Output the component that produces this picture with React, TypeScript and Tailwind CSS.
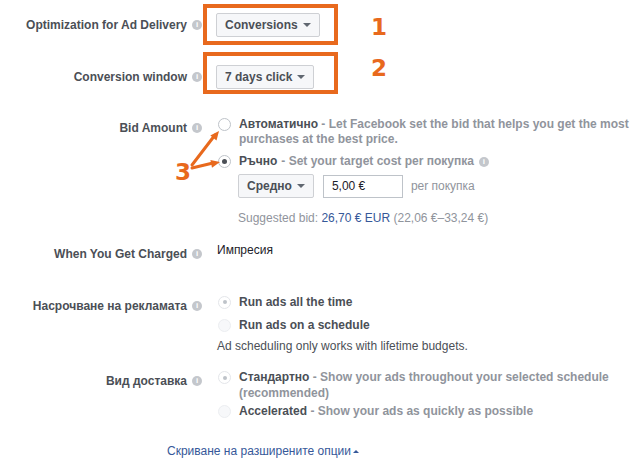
import React from "react";

const labelCls = "text-[12px] leading-[16px] font-bold text-[#4b4f56] whitespace-nowrap";
const orange = "#e8691d";

function Info() {
  return (
    <span className="ml-[5px] inline-flex h-[10px] w-[10px] shrink-0 items-center justify-center rounded-full bg-[#c4c7cc] text-[8px] font-bold leading-none text-white">
      i
    </span>
  );
}

function Label({ text, pt }: { text: string; pt: string }) {
  return (
    <div className={`flex w-[203px] shrink-0 justify-end pr-[1px] ${pt}`}>
      <div className="flex items-center">
        <span className={labelCls}>{text}</span>
        <Info />
      </div>
    </div>
  );
}

function Caret() {
  return <span className="ml-[5px] h-0 w-0 border-x-[4px] border-t-[4px] border-x-transparent border-t-[#606770]" />;
}

function Dropdown({ text }: { text: string }) {
  return (
    <div className="flex h-[24px] w-max items-center rounded-[2px] border border-[#ced0d4] bg-[#f6f7f9] px-[8px] text-[12px] font-bold text-[#4b4f56]">
      {text}
      <Caret />
    </div>
  );
}

type RadioKind = "empty" | "checked" | "soft" | "faint";

function Radio({ kind }: { kind: RadioKind }) {
  const ring = {
    empty: "border-[#bec3c9] bg-white",
    checked: "border-[#bec3c9] bg-white",
    soft: "border-[#e4e6ea] bg-white",
    faint: "border-[#eceef1] bg-[#f7f8fa]",
  }[kind];
  return (
    <span className={`flex h-[13px] w-[13px] shrink-0 items-center justify-center rounded-full border ${ring}`}>
      {kind === "checked" && <span className="h-[5px] w-[5px] rounded-full bg-[#4b4f56]" />}
      {kind === "soft" && <span className="h-[4px] w-[4px] rounded-full bg-[#bec3c9]" />}
    </span>
  );
}

export default function App() {
  return (
    <div className="relative h-[459px] w-[642px] overflow-hidden bg-white font-['Liberation_Sans',Arial,sans-serif]">
      {/* Optimization */}
      <div className="mt-[4px] flex items-start">
        <Label text="Optimization for Ad Delivery" pt="pt-[13px]" />
        <div className="h-[41px] w-[135px] border-4 border-[#e8691d] pl-[9px] pt-[5px]">
          <Dropdown text="Conversions" />
        </div>
        <span className="ml-[33px] mt-[12px] font-['DejaVu_Sans',sans-serif] text-[23px] font-bold leading-[23px] text-[#e8691d]">1</span>
      </div>

      {/* Conversion window */}
      <div className="mt-[7px] flex items-start">
        <Label text="Conversion window" pt="pt-[17px]" />
        <div className="h-[42px] w-[135px] border-4 border-[#e8691d] pl-[9px] pt-[9px]">
          <Dropdown text="7 days click" />
        </div>
        <span className="ml-[33px] mt-[5px] font-['DejaVu_Sans',sans-serif] text-[23px] font-bold leading-[23px] text-[#e8691d]">2</span>
      </div>

      {/* Bid amount */}
      <div className="mt-[23px] flex items-start">
        <Label text="Bid Amount" pt="pt-[3px]" />
        <div className="pl-[15px] text-[12px] font-bold">
          <div className="flex items-start gap-[8px]">
            <span className="mt-[1px]"><Radio kind="empty" /></span>
            <p className="w-[396px] leading-[15px] text-[#90949c]">
              <span className="text-[#4b4f56]">Автоматично</span> - Let Facebook set the bid that helps you get the most purchases at the best price.
            </p>
          </div>
          <div className="mt-[7px] flex items-start gap-[8px]">
            <span className="mt-[1px]"><Radio kind="checked" /></span>
            <p className="flex items-center leading-[15px] text-[#90949c]">
              <span className="mr-[4px] text-[#4b4f56]">Ръчно</span> - Set your target cost per покупка
              <Info />
            </p>
          </div>
          <div className="mt-[5px] pl-[20px]">
            <div className="flex items-center">
              <Dropdown text="Средно" />
              <div className="ml-[9px] flex h-[23px] w-[80px] items-center border border-[#bec3c9] bg-white pl-[8px] text-[12px] font-normal text-[#1d2129]">
                5,00 €
              </div>
              <span className="ml-[8px] text-[12px] font-normal text-[#90949c]">per покупка</span>
            </div>
            <p className="mt-[12px] text-[12px] font-normal leading-[16px] text-[#90949c]">
              Suggested bid: <span className="text-[#365899]">26,70 € EUR</span> (22,06 €–33,24 €)
            </p>
          </div>
        </div>
      </div>

      {/* When you get charged */}
      <div className="mt-[16px] flex items-start">
        <Label text="When You Get Charged" pt="pt-[4px]" />
        <p className="pl-[14px] text-[12px] leading-[16px] text-[#1d2129]">Импресия</p>
      </div>

      {/* Scheduling */}
      <div className="mt-[32px] flex items-start">
        <Label text="Насрочване на рекламата" pt="pt-[4px]" />
        <div className="text-[12px]">
          <div className="flex items-center gap-[8px] pl-[15px]">
            <Radio kind="soft" />
            <span className="font-bold leading-[16px] text-[#4b4f56]">Run ads all the time</span>
          </div>
          <div className="mt-[7px] flex items-center gap-[8px] pl-[15px]">
            <Radio kind="faint" />
            <span className="font-bold leading-[16px] text-[#4b4f56]">Run ads on a schedule</span>
          </div>
          <p className="mt-[5px] pl-[14px] leading-[16px] text-[#4b4f56]">Ad scheduling only works with lifetime budgets.</p>
        </div>
      </div>

      {/* Delivery type */}
      <div className="mt-[15px] flex items-start">
        <Label text="Вид доставка" pt="pt-[4px]" />
        <div className="pl-[15px] text-[12px] font-bold">
          <div className="flex items-start gap-[8px]">
            <span className="mt-[2px]"><Radio kind="soft" /></span>
            <p className="w-[400px] leading-[16px] text-[#90949c]">
              <span className="text-[#4b4f56]">Стандартно</span> - Show your ads throughout your selected schedule (recommended)
            </p>
          </div>
          <div className="mt-[2px] flex items-start gap-[8px]">
            <span className="mt-[2px]"><Radio kind="faint" /></span>
            <p className="leading-[16px] text-[#90949c]">
              <span className="text-[#4b4f56]">Accelerated</span> - Show your ads as quickly as possible
            </p>
          </div>
        </div>
      </div>

      {/* Hide advanced */}
      <div className="mt-[24px] flex items-center pl-[167px] text-[12px] leading-[16px] text-[#365899]">
        Скриване на разширените опции
        <span className="ml-[2px] h-0 w-0 border-x-[3px] border-b-[3px] border-x-transparent border-b-[#365899]" />
      </div>

      {/* annotation 3 with arrows */}
      <span className="absolute left-[175px] top-[161px] font-['DejaVu_Sans',sans-serif] text-[23px] font-bold leading-[23px] text-[#e8691d]">3</span>
      <svg className="absolute left-[170px] top-[118px]" width="60" height="70" viewBox="0 0 60 70">
        <g stroke={orange} strokeWidth="3" strokeLinecap="round" fill="none">
          <path d="M22 47 L45 17" />
          <path d="M22 50 L43 45" />
        </g>
        <g fill={orange}>
          <path d="M49 13 L46.5 22.5 L40.3 17.5 Z" />
          <path d="M50 44 L42 49.8 L40.4 42 Z" />
        </g>
      </svg>
    </div>
  );
}
